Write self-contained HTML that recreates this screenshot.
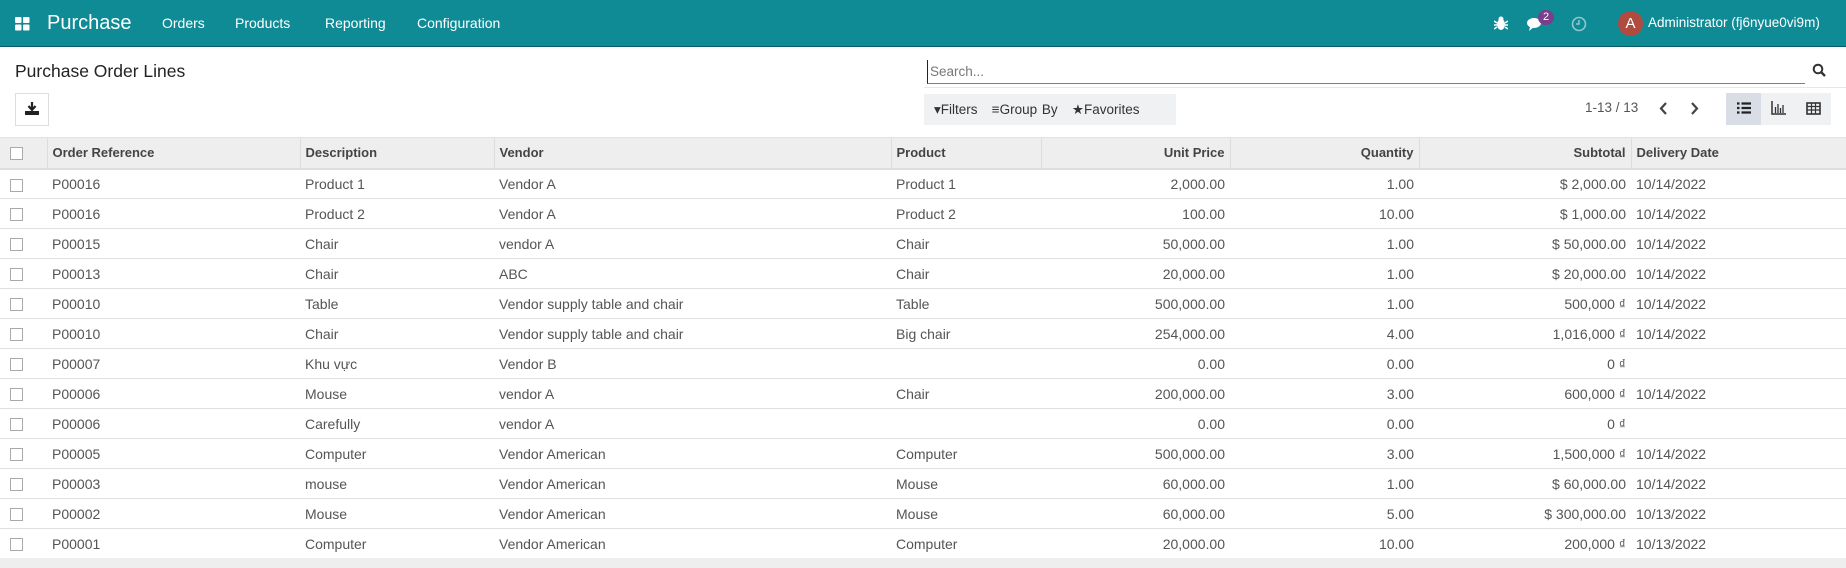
<!DOCTYPE html>
<html><head><meta charset="utf-8"><style>
*{box-sizing:border-box;margin:0;padding:0}
body{width:1846px;height:568px;overflow:hidden;background:#fff;font-family:"Liberation Sans",sans-serif;color:#4c4c4c;position:relative}
.nav{position:absolute;left:0;top:0;width:1846px;height:47px;background:#0f8b96;border-bottom:1px solid #0a5d66;color:#fff}
.nav span{position:absolute;top:15px;font-size:14px}
.a{position:absolute}
table{position:absolute;left:0;top:137px;border-collapse:collapse;table-layout:fixed;width:1846px;font-size:14px}
th{background:#eee;height:31px;text-align:left;font-weight:bold;color:#444;padding:0 5px;border-left:1px solid #ddd;border-bottom:2px solid #ddd;border-top:1px solid #e2e2e2;font-size:13px}
td{height:30px;padding:0 5px;border-bottom:1px solid #e0e0e0;white-space:nowrap;color:#555}
.r{text-align:right}
.cb{display:inline-block;width:13px;height:13px;border:1px solid #aaa;background:#fff;vertical-align:middle;margin-left:10px}
th:first-child,td:first-child{padding:0;border-left:none}
</style></head><body>
<div class="nav">
<svg class="a" style="left:15px;top:17px" width="15" height="14"><rect x="0" y="0" width="6.5" height="6" rx="1" fill="#fff"/><rect x="8" y="0" width="6.5" height="6" rx="1" fill="#fff"/><rect x="0" y="7.5" width="6.5" height="6" rx="1" fill="#fff"/><rect x="8" y="7.5" width="6.5" height="6" rx="1" fill="#fff"/></svg>
<span style="left:47px;top:12px;font-size:20px">Purchase</span>
<span style="left:162px">Orders</span>
<span style="left:235px">Products</span>
<span style="left:325px">Reporting</span>
<span style="left:417px">Configuration</span>
<svg class="a" style="left:1494px;top:16px" width="14" height="15"><ellipse cx="7" cy="8.5" rx="4" ry="5.5" fill="#fff"/><circle cx="7" cy="3" r="2.5" fill="#fff"/><path d="M0 5 L3 7 M0 9 H3 M0 13 L3 11 M14 5 L11 7 M14 9 H11 M14 13 L11 11" stroke="#fff" stroke-width="1.5"/></svg>
<svg class="a" style="left:1526px;top:16px" width="18" height="16"><ellipse cx="8" cy="7" rx="7" ry="5" fill="#fff"/><path d="M4 11 L3 15 L8 11Z" fill="#fff"/></svg>
<div class="a" style="left:1538px;top:10px;width:16px;height:15px;border-radius:8px;background:#7a3f8c;font-size:11px;text-align:center;line-height:15px">2</div>
<svg class="a" style="left:1571px;top:16px" width="16" height="16"><circle cx="8" cy="8" r="6.5" fill="none" stroke="#8fc7cc" stroke-width="1.6"/><path d="M8 4 V8 H5" fill="none" stroke="#8fc7cc" stroke-width="1.5"/></svg>
<div class="a" style="left:1618px;top:11px;width:25px;height:25px;border-radius:50%;background:#b04b3f;font-size:15px;text-align:center;line-height:25px">A</div>
<span style="left:1648px;font-size:13.5px">Administrator (fj6nyue0vi9m)</span>
</div>
<div class="a" style="left:15px;top:61px;font-size:17.5px;color:#222">Purchase Order Lines</div>
<div class="a" style="left:15px;top:93px;width:34px;height:33px;border:1px solid #ddd"></div>
<svg class="a" style="left:25px;top:102px" width="14" height="13"><path d="M7 0 V7 M3.5 4 L7 8 L10.5 4" stroke="#222" stroke-width="2.2" fill="none"/><rect x="0" y="9" width="14" height="4" fill="#222"/></svg>
<div class="a" style="left:927px;top:60px;width:878px;height:24px;border-bottom:1px solid #2aa0a8;font-size:13.5px;color:#777;padding-left:2px;line-height:24px;border-left:1px solid #222">Search...</div>
<svg class="a" style="left:1812px;top:63px" width="14" height="14"><circle cx="6" cy="6" r="4.3" fill="none" stroke="#333" stroke-width="2"/><path d="M9 9 L13 13" stroke="#333" stroke-width="2.4"/></svg>
<div class="a" style="left:924px;top:87px;width:922px;border-top:1px solid #e6e6e6"></div>
<div class="a" style="left:924px;top:94px;width:252px;height:31px;background:#f0f1f3;font-size:13.5px;color:#333;line-height:31px;padding-left:10px;word-spacing:1px">▾Filters &nbsp; ≡Group By &nbsp; ★Favorites</div>
<div class="a" style="left:1585px;top:100px;font-size:13.5px;color:#555">1-13 / 13</div>
<svg class="a" style="left:1658px;top:102px" width="45" height="13"><path d="M8 1 L3 6.5 L8 12 M34 1 L39 6.5 L34 12" stroke="#444" stroke-width="2.2" fill="none"/></svg>
<div class="a" style="left:1726px;top:93px;width:105px;height:32px;background:#f0f1f3"></div>
<div class="a" style="left:1726px;top:93px;width:35px;height:32px;background:#d9dee6"></div>
<svg class="a" style="left:1737px;top:102px" width="14" height="12"><path d="M0 1.5H2.5M4.5 1.5H14M0 6H2.5M4.5 6H14M0 10.5H2.5M4.5 10.5H14" stroke="#222" stroke-width="2.2"/></svg>
<svg class="a" style="left:1771px;top:101px" width="15" height="14"><path d="M1 0V13H15" stroke="#333" stroke-width="1.5" fill="none"/><path d="M4.5 12V6M7 12V3M9.5 12V7M12 12V4" stroke="#333" stroke-width="1.3"/></svg>
<svg class="a" style="left:1806px;top:102px" width="15" height="13"><rect x="1" y="1" width="13" height="11" fill="none" stroke="#333" stroke-width="1.6"/><path d="M1 4.5H14M1 8H14M5.5 1V12M9.5 1V12" stroke="#333" stroke-width="1.2"/></svg>
<table>
<colgroup><col style="width:47px"><col style="width:253px"><col style="width:194px"><col style="width:397px"><col style="width:150px"><col style="width:189px"><col style="width:189px"><col style="width:212px"><col style="width:215px"></colgroup>
<tr><th><span class="cb"></span></th><th>Order Reference</th><th>Description</th><th>Vendor</th><th>Product</th><th class="r">Unit Price</th><th class="r">Quantity</th><th class="r">Subtotal</th><th>Delivery Date</th></tr>
<tr><td><span class="cb"></span></td><td>P00016</td><td>Product 1</td><td>Vendor A</td><td>Product 1</td><td class="r">2,000.00</td><td class="r">1.00</td><td class="r">$ 2,000.00</td><td>10/14/2022</td></tr>
<tr><td><span class="cb"></span></td><td>P00016</td><td>Product 2</td><td>Vendor A</td><td>Product 2</td><td class="r">100.00</td><td class="r">10.00</td><td class="r">$ 1,000.00</td><td>10/14/2022</td></tr>
<tr><td><span class="cb"></span></td><td>P00015</td><td>Chair</td><td>vendor A</td><td>Chair</td><td class="r">50,000.00</td><td class="r">1.00</td><td class="r">$ 50,000.00</td><td>10/14/2022</td></tr>
<tr><td><span class="cb"></span></td><td>P00013</td><td>Chair</td><td>ABC</td><td>Chair</td><td class="r">20,000.00</td><td class="r">1.00</td><td class="r">$ 20,000.00</td><td>10/14/2022</td></tr>
<tr><td><span class="cb"></span></td><td>P00010</td><td>Table</td><td>Vendor supply table and chair</td><td>Table</td><td class="r">500,000.00</td><td class="r">1.00</td><td class="r">500,000 ₫</td><td>10/14/2022</td></tr>
<tr><td><span class="cb"></span></td><td>P00010</td><td>Chair</td><td>Vendor supply table and chair</td><td>Big chair</td><td class="r">254,000.00</td><td class="r">4.00</td><td class="r">1,016,000 ₫</td><td>10/14/2022</td></tr>
<tr><td><span class="cb"></span></td><td>P00007</td><td>Khu vực</td><td>Vendor B</td><td></td><td class="r">0.00</td><td class="r">0.00</td><td class="r">0 ₫</td><td></td></tr>
<tr><td><span class="cb"></span></td><td>P00006</td><td>Mouse</td><td>vendor A</td><td>Chair</td><td class="r">200,000.00</td><td class="r">3.00</td><td class="r">600,000 ₫</td><td>10/14/2022</td></tr>
<tr><td><span class="cb"></span></td><td>P00006</td><td>Carefully</td><td>vendor A</td><td></td><td class="r">0.00</td><td class="r">0.00</td><td class="r">0 ₫</td><td></td></tr>
<tr><td><span class="cb"></span></td><td>P00005</td><td>Computer</td><td>Vendor American</td><td>Computer</td><td class="r">500,000.00</td><td class="r">3.00</td><td class="r">1,500,000 ₫</td><td>10/14/2022</td></tr>
<tr><td><span class="cb"></span></td><td>P00003</td><td>mouse</td><td>Vendor American</td><td>Mouse</td><td class="r">60,000.00</td><td class="r">1.00</td><td class="r">$ 60,000.00</td><td>10/14/2022</td></tr>
<tr><td><span class="cb"></span></td><td>P00002</td><td>Mouse</td><td>Vendor American</td><td>Mouse</td><td class="r">60,000.00</td><td class="r">5.00</td><td class="r">$ 300,000.00</td><td>10/13/2022</td></tr>
<tr><td><span class="cb"></span></td><td>P00001</td><td>Computer</td><td>Vendor American</td><td>Computer</td><td class="r">20,000.00</td><td class="r">10.00</td><td class="r">200,000 ₫</td><td>10/13/2022</td></tr>
</table>
<div class="a" style="left:0;top:558px;width:1846px;height:10px;background:#eee"></div>
</body></html>
